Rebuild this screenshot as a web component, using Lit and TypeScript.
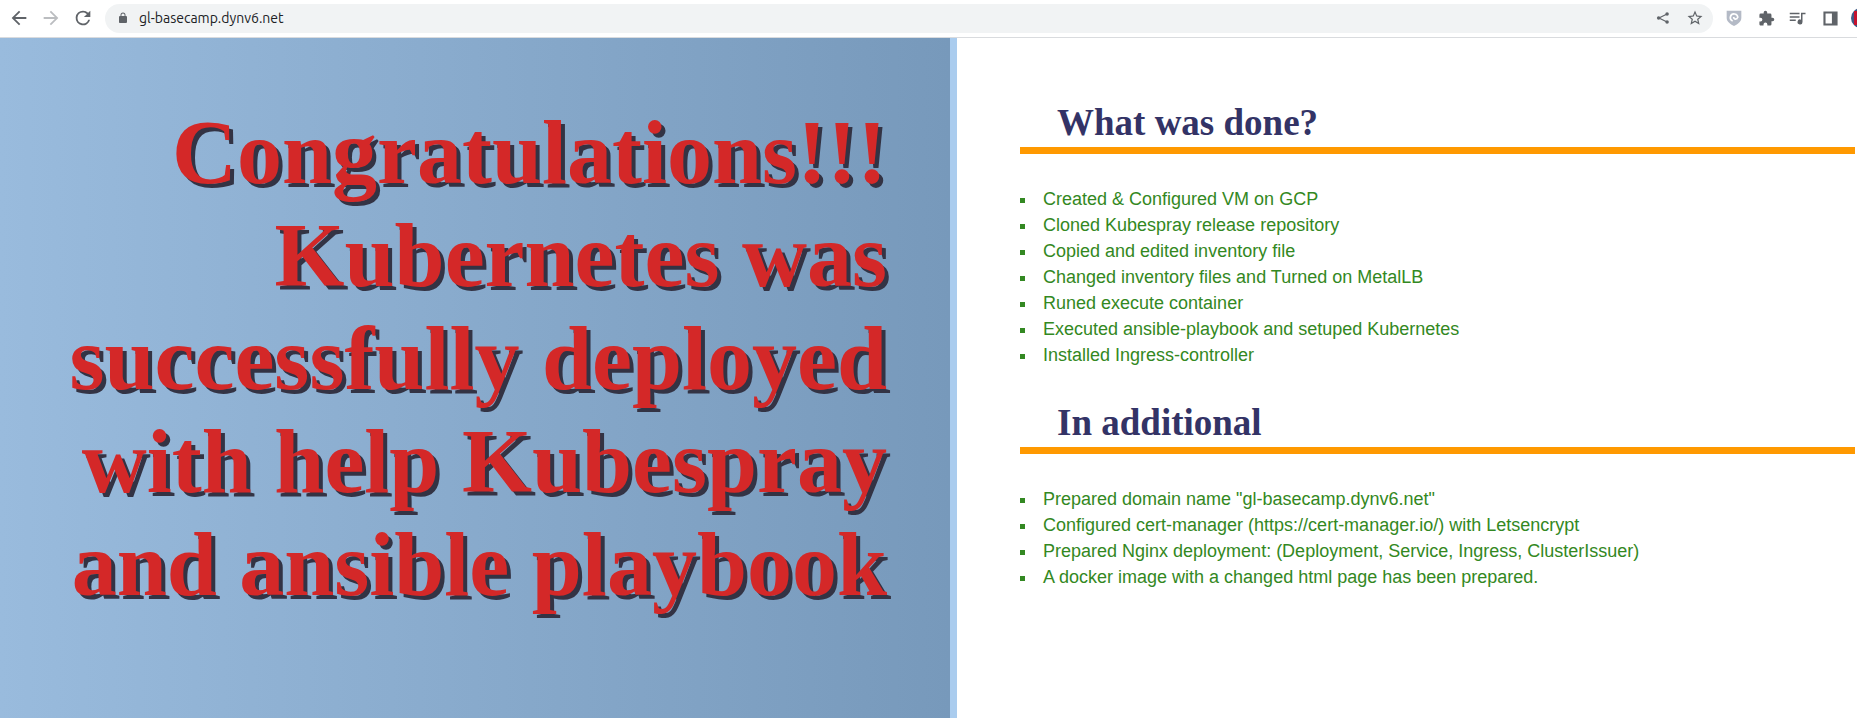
import { LitElement, html, css, svg } from "lit";
import { customElement, property } from "lit/decorators.js";

const icons = {
  back: svg`<path d="M20 11H7.83l5.59-5.59L12 4l-8 8 8 8 1.41-1.41L7.83 13H20v-2z"/>`,
  forward: svg`<path d="M12 4l-1.41 1.41L16.17 11H4v2h12.17l-5.58 5.59L12 20l8-8z"/>`,
  reload: svg`<path d="M17.65 6.35A7.96 7.96 0 0 0 12 4a8 8 0 1 0 7.73 10h-2.08A6 6 0 1 1 12 6c1.66 0 3.14.69 4.22 1.78L13 11h7V4l-2.35 2.35z"/>`,
  lock: svg`<path d="M18 8h-1V6A5 5 0 0 0 7 6v2H6a2 2 0 0 0-2 2v10c0 1.100.9 2 2 2h12a2 2 0 0 0 2-2V10a2 2 0 0 0-2-2zM8.900 6a3.100 3.100 0 0 1 6.200 0v2H8.900z"/>`,
  share: svg`<path d="M5 12 19 5M5 12l14 7" fill="none" stroke="currentColor" stroke-width="2"/><circle cx="4.500" cy="12" r="3"/><circle cx="19" cy="5" r="3"/><circle cx="19" cy="19" r="3"/>`,
  star: svg`<path d="M22 9.240l-7.190-.62L12 2 9.190 8.630 2 9.240l5.460 4.730L5.820 21 12 17.270 18.180 21l-1.630-7.030L22 9.240zM12 15.400l-3.760 2.270 1-4.280-3.320-2.880 4.380-.38L12 6.100l1.710 4.040 4.380.38-3.320 2.880 1 4.280L12 15.400z"/>`,
  shield: svg`<path d="M1 1h22v11c0 5.500-5 9-11 12C6 21 1 17.500 1 12z" fill="#b4bac6"/><path d="M17.500 12A5.500 5.500 0 1 0 10 16.500M11.500 10.500c0 3 2.500 4 6 2" fill="none" stroke="#fff" stroke-width="2.600"/>`,
  puzzle: svg`<path d="M20.500 11H19V7a2 2 0 0 0-2-2h-4V3.500a2.500 2.500 0 0 0-5 0V5H4a2 2 0 0 0-2 2v3.800h1.500a2.700 2.700 0 0 1 0 5.400H2V20c0 1.100.9 2 2 2h3.800v-1.500a2.700 2.700 0 0 1 5.400 0V22H17a2 2 0 0 0 2-2v-4h1.500a2.500 2.500 0 0 0 0-5z"/>`,
  queue: svg`<path d="M14 5H1v2h13V5zm0 4.500H1v2h13v-2zM1 16h8v-2H1v2zM16 5v9.200a3.300 3.300 0 1 0 2 3V7h4V5h-6z"/>`,
  panel: svg`<path d="M2 2h20v20H2zM5 5v14h9V5z" fill-rule="evenodd"/>`,
};

@customElement("browser-bar")
class BrowserBar extends LitElement {
  static styles = css`
    :host {
      display: flex;
      align-items: center;
      height: 37px;
      padding-left: 8px;
      border-bottom: 1px solid #d9dbde;
      background: #fff;
      color: #5f6368;
      overflow: hidden;
    }
    button {
      display: grid;
      place-items: center;
      flex: none;
      padding: 0;
      border: 0;
      background: none;
      color: inherit;
    }
    svg {
      display: block;
      fill: currentColor;
      width: 16px;
      height: 16px;
    }
    .nav,
    .tools {
      display: flex;
      flex: none;
      padding-bottom: 1px;
    }
    .nav {
      gap: 10px;
      margin-right: 11px;
    }
    .nav button {
      width: 22px;
      height: 22px;
    }
    .nav svg {
      width: 22px;
      height: 22px;
    }
    .nav button:disabled {
      color: #bbbdc0;
    }
    .omnibox {
      display: flex;
      flex: 1;
      align-items: center;
      box-sizing: border-box;
      min-width: 0;
      height: 29px;
      padding: 0 2px 1px 11px;
      border-radius: 15px;
      background: #f1f3f4;
    }
    .omnibox button {
      width: 32px;
      height: 22px;
    }
    .omnibox .site {
      width: 14px;
    }
    .omnibox .site svg {
      width: 12px;
      height: 12px;
    }
    .omnibox .share svg {
      width: 14px;
      height: 14px;
    }
    .omnibox .bookmark svg {
      width: 18px;
      height: 18px;
    }
    input {
      flex: 1;
      min-width: 0;
      margin: 0;
      padding: 0 0 0 9px;
      border: 0;
      outline: 0;
      background: none;
      color: #202124;
      font: 14px/20px Ubuntu, "Noto Sans", sans-serif;
    }
    .tools {
      gap: 10px;
      padding-left: 10px;
    }
    .tools button {
      width: 22px;
      height: 22px;
    }
    .tools .queue svg {
      width: 18px;
      height: 18px;
    }
    .tools .panel svg {
      width: 17px;
      height: 17px;
    }
    .tools .extensions svg {
      width: 17px;
      height: 17px;
    }
    .tools .avatar {
      justify-items: start;
      width: 6px;
      overflow: hidden;
    }
    .avatar svg {
      width: 20px;
      height: 20px;
    }
  `;

  icon(shape: unknown) {
    return html`<svg viewBox="0 0 24 24" aria-hidden="true">${shape}</svg>`;
  }

  render() {
    return html`
      <nav class="nav">
        <button aria-label="Back">${this.icon(icons.back)}</button>
        <button aria-label="Forward" disabled>${this.icon(icons.forward)}</button>
        <button aria-label="Reload">${this.icon(icons.reload)}</button>
      </nav>
      <div class="omnibox">
        <button class="site" aria-label="Site information">${this.icon(icons.lock)}</button>
        <input aria-label="Address" spellcheck="false" .value=${"gl-basecamp.dynv6.net"} />
        <button class="share" aria-label="Share">${this.icon(icons.share)}</button>
        <button class="bookmark" aria-label="Bookmark">${this.icon(icons.star)}</button>
      </div>
      <div class="tools">
        <button aria-label="Privacy shield">${this.icon(icons.shield)}</button>
        <button class="extensions" aria-label="Extensions">${this.icon(icons.puzzle)}</button>
        <button class="queue" aria-label="Media">${this.icon(icons.queue)}</button>
        <button class="panel" aria-label="Side panel">${this.icon(icons.panel)}</button>
        <button class="avatar" aria-label="Profile">
          <svg viewBox="0 0 20 20" aria-hidden="true">
            <circle cx="10" cy="10" r="10" fill="#3c5a86" />
            <path d="M3 3h14v14H3z" fill="#c4122e" />
          </svg>
        </button>
      </div>
    `;
  }
}

@customElement("topic-list")
class TopicList extends LitElement {
  @property() heading = "";
  @property({ attribute: false }) items: string[] = [];

  static styles = css`
    :host {
      display: block;
    }
    h2 {
      margin: 0;
      padding: 0 37px 3px;
      border-bottom: 7px solid #ff9900;
      color: #333366;
      font: bold 37px/43px "Liberation Serif", "Times New Roman", serif;
    }
    ul {
      margin: 32px 0 0;
      padding: 0;
      list-style: none;
      color: #338822;
      font: 18px/26px "Liberation Sans", Arial, sans-serif;
    }
    li {
      display: flex;
      align-items: flex-start;
      gap: 18px;
    }
    li::before {
      content: "";
      flex: none;
      width: 5px;
      height: 5px;
      margin-top: 12px;
      background: currentColor;
    }
  `;

  render() {
    return html`
      <h2>${this.heading}</h2>
      <ul>
        ${this.items.map((item) => html`<li>${item}</li>`)}
      </ul>
    `;
  }
}

@customElement("app-root")
class AppRoot extends LitElement {
  static styles = css`
    :host {
      display: flex;
      flex-direction: column;
      min-height: 100vh;
      background: #fff;
    }
    main {
      display: grid;
      flex: 1;
      grid-template-columns: minmax(0, 957fr) minmax(0, 900fr);
    }
    .hero {
      padding: 63px;
      border-right: 7px solid #aaccee;
      background: linear-gradient(to right, #99bbdd, #7799bb) padding-box;
    }
    h1 {
      margin: 0;
      color: #d42828;
      font: bold 90px/103px "Liberation Serif", "Times New Roman", serif;
      text-align: right;
      text-shadow: 4px 4px #333344;
    }
    .notes {
      display: flex;
      flex-direction: column;
      gap: 33px;
      padding: 63px 2px 63px 63px;
    }
  `;

  done = [
    "Created & Configured VM on GCP",
    "Cloned Kubespray release repository",
    "Copied and edited inventory file",
    "Changed inventory files and Turned on MetalLB",
    "Runed execute container",
    "Executed ansible-playbook and setuped Kubernetes",
    "Installed Ingress-controller",
  ];

  additional = [
    'Prepared domain name "gl-basecamp.dynv6.net"',
    "Configured cert-manager (https://cert-manager.io/) with Letsencrypt",
    "Prepared Nginx deployment: (Deployment, Service, Ingress, ClusterIssuer)",
    "A docker image with a changed html page has been prepared.",
  ];

  render() {
    return html`
      <browser-bar></browser-bar>
      <main>
        <section class="hero">
          <h1>Congratulations!!! Kubernetes was successfully deployed with help Kubespray and ansible playbook</h1>
        </section>
        <section class="notes">
          <topic-list heading="What was done?" .items=${this.done}></topic-list>
          <topic-list heading="In additional" .items=${this.additional}></topic-list>
        </section>
      </main>
    `;
  }
}
